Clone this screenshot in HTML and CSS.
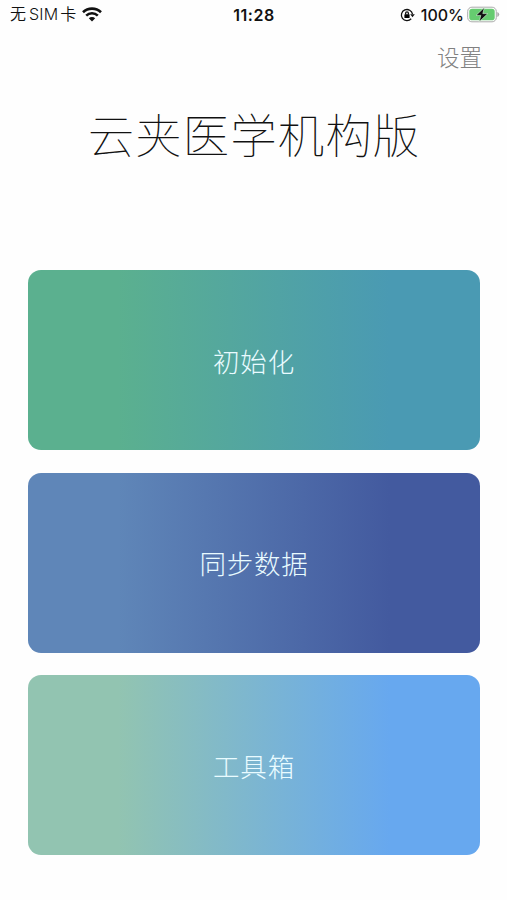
FILE: index.html
```html
<!DOCTYPE html>
<html lang="zh-CN">
<head>
  <meta charset="UTF-8">
  <meta name="viewport" content="width=device-width, initial-scale=1">
  <title>云夹医学机构版</title>
  <link rel="stylesheet" href="styles.css">
</head>
<body>

  <div class="screen">
    <header class="status-bar">
      <div class="status-left">
        <span class="carrier">无<span class="sim">SIM</span>卡</span>
        <svg class="wifi" viewBox="0 0 20 15" width="20" height="15">
          <path d="M1 5.2 A13 13 0 0 1 19 5.2" />
          <path d="M4.2 8.6 A8.4 8.4 0 0 1 15.8 8.6" />
          <path class="wifi-dot" d="M10 14.4 L6.8 11.2 A4.6 4.6 0 0 1 13.2 11.2 Z" />
        </svg>
      </div>
      <div class="time">11:28</div>
      <div class="status-right">
        <svg class="lock" viewBox="0 0 15 14" width="15" height="14">
          <path d="M11.2 10.8 A5.6 5.6 0 1 1 12.5 6.2" />
          <path class="lock-arrow" d="M10.2 6.2 H14.8 L12.5 9.2 Z" />
          <path d="M5.6 6.5 V5.2 A1.4 1.4 0 0 1 8.4 5.2 V6.5" />
          <rect x="4.4" y="6.2" width="5.2" height="3.9" rx=".6" />
        </svg>
        <span class="percent">100%</span>
        <svg class="battery" viewBox="0 0 33 17" width="33" height="17">
          <rect class="battery-case" x=".7" y="1.2" width="28.6" height="14.6" rx="4.2" />
          <rect class="battery-level" x="2.3" y="2.8" width="25.4" height="11.4" rx="2.8" />
          <path class="battery-cap" d="M30.3 6 Q32.2 6.8 32.2 8.5 Q32.2 10.2 30.3 11 Z" />
          <path class="bolt" d="M17.4 1.4 L9 9.4 H13.8 L12.2 15.8 L20.8 7.6 H15.8 Z" />
        </svg>
      </div>
    </header>

    <nav class="nav">
      <a class="settings">设置</a>
    </nav>

    <h1 class="title">云夹医学机构版</h1>

    <main class="menu">
      <button class="card card-init">初始化</button>
      <button class="card card-sync">同步数据</button>
      <button class="card card-tools">工具箱</button>
    </main>
  </div>

</body>
</html>
```
FILE: styles.css
```css
body {
  margin: 0;
  background: #fefefe;
}

.screen {
  height: 900px;
  overflow: hidden;
  font-family: Inter, "Noto Sans CJK SC", sans-serif;
  color: #111;
}

/* Statusleiste */
.status-bar {
  display: grid;
  grid-template-columns: 1fr auto 1fr;
  align-items: center;
  height: 29px;
  padding: 0 7px 0 10px;
  font-size: 16px;
}
.status-left,
.status-right {
  display: flex;
  align-items: center;
}
.status-left {
  gap: 6px;
}
.status-right {
  justify-content: flex-end;
  gap: 3px;
}
.carrier {
  line-height: 20px;
  padding-bottom: 1px;
  font-weight: 350;
}
.sim {
  margin: 0 2px 0 3px;
  letter-spacing: .2px;
}
.time {
  padding-right: 2px;
  font-weight: 600;
  letter-spacing: .5px;
}
.percent {
  margin-left: 3px;
  font-weight: 450;
}
.wifi path {
  fill: none;
  stroke: #111;
  stroke-width: 2.6;
}
.wifi .wifi-dot {
  fill: #111;
  stroke: none;
}
.lock path {
  fill: none;
  stroke: #111;
  stroke-width: 1.3;
}
.lock .lock-arrow {
  fill: #111;
  stroke: none;
}
.battery-case {
  fill: none;
  stroke: #aaa;
}
.battery-level {
  fill: #66cc70;
}
.battery-cap {
  fill: #aaa;
}
.bolt {
  fill: #111;
  stroke: #d5f5d8;
  stroke-width: .6;
}

.nav {
  display: flex;
  justify-content: flex-end;
  height: 58px;
  padding: 0 25px;
  box-sizing: border-box;
}
.settings {
  font-size: 22.5px;
  line-height: 57px;
  font-weight: 300;
  color: #808080;
}

.title {
  margin: 0;
  height: 96px;
  padding: 1px 0 0 1px;
  box-sizing: border-box;
  line-height: 96px;
  font-size: 46.5px;
  font-weight: 100;
  letter-spacing: 1px;
  text-align: center;
  color: #111;
}

/* Karten */
.menu {
  display: flex;
  flex-direction: column;
  gap: 22.4px;
  padding: 87.4px 27px 0 28px;
}
.card {
  height: 180px;
  padding: 0;
  border: 0;
  border-radius: 13px;
  font-family: inherit;
  font-size: 26.5px;
  font-weight: 300;
  letter-spacing: .8px;
  color: #e9fbff;
}
.card-init {
  background: linear-gradient(90deg, #5bb08f 20%, #4a9ab3 80%);
}
.card-sync {
  background: linear-gradient(90deg, #5f86b8 20%, #435a9f 80%);
}
.card-tools {
  background: linear-gradient(90deg, #92c4b1 20%, #67a8ef 80%);
}
```
